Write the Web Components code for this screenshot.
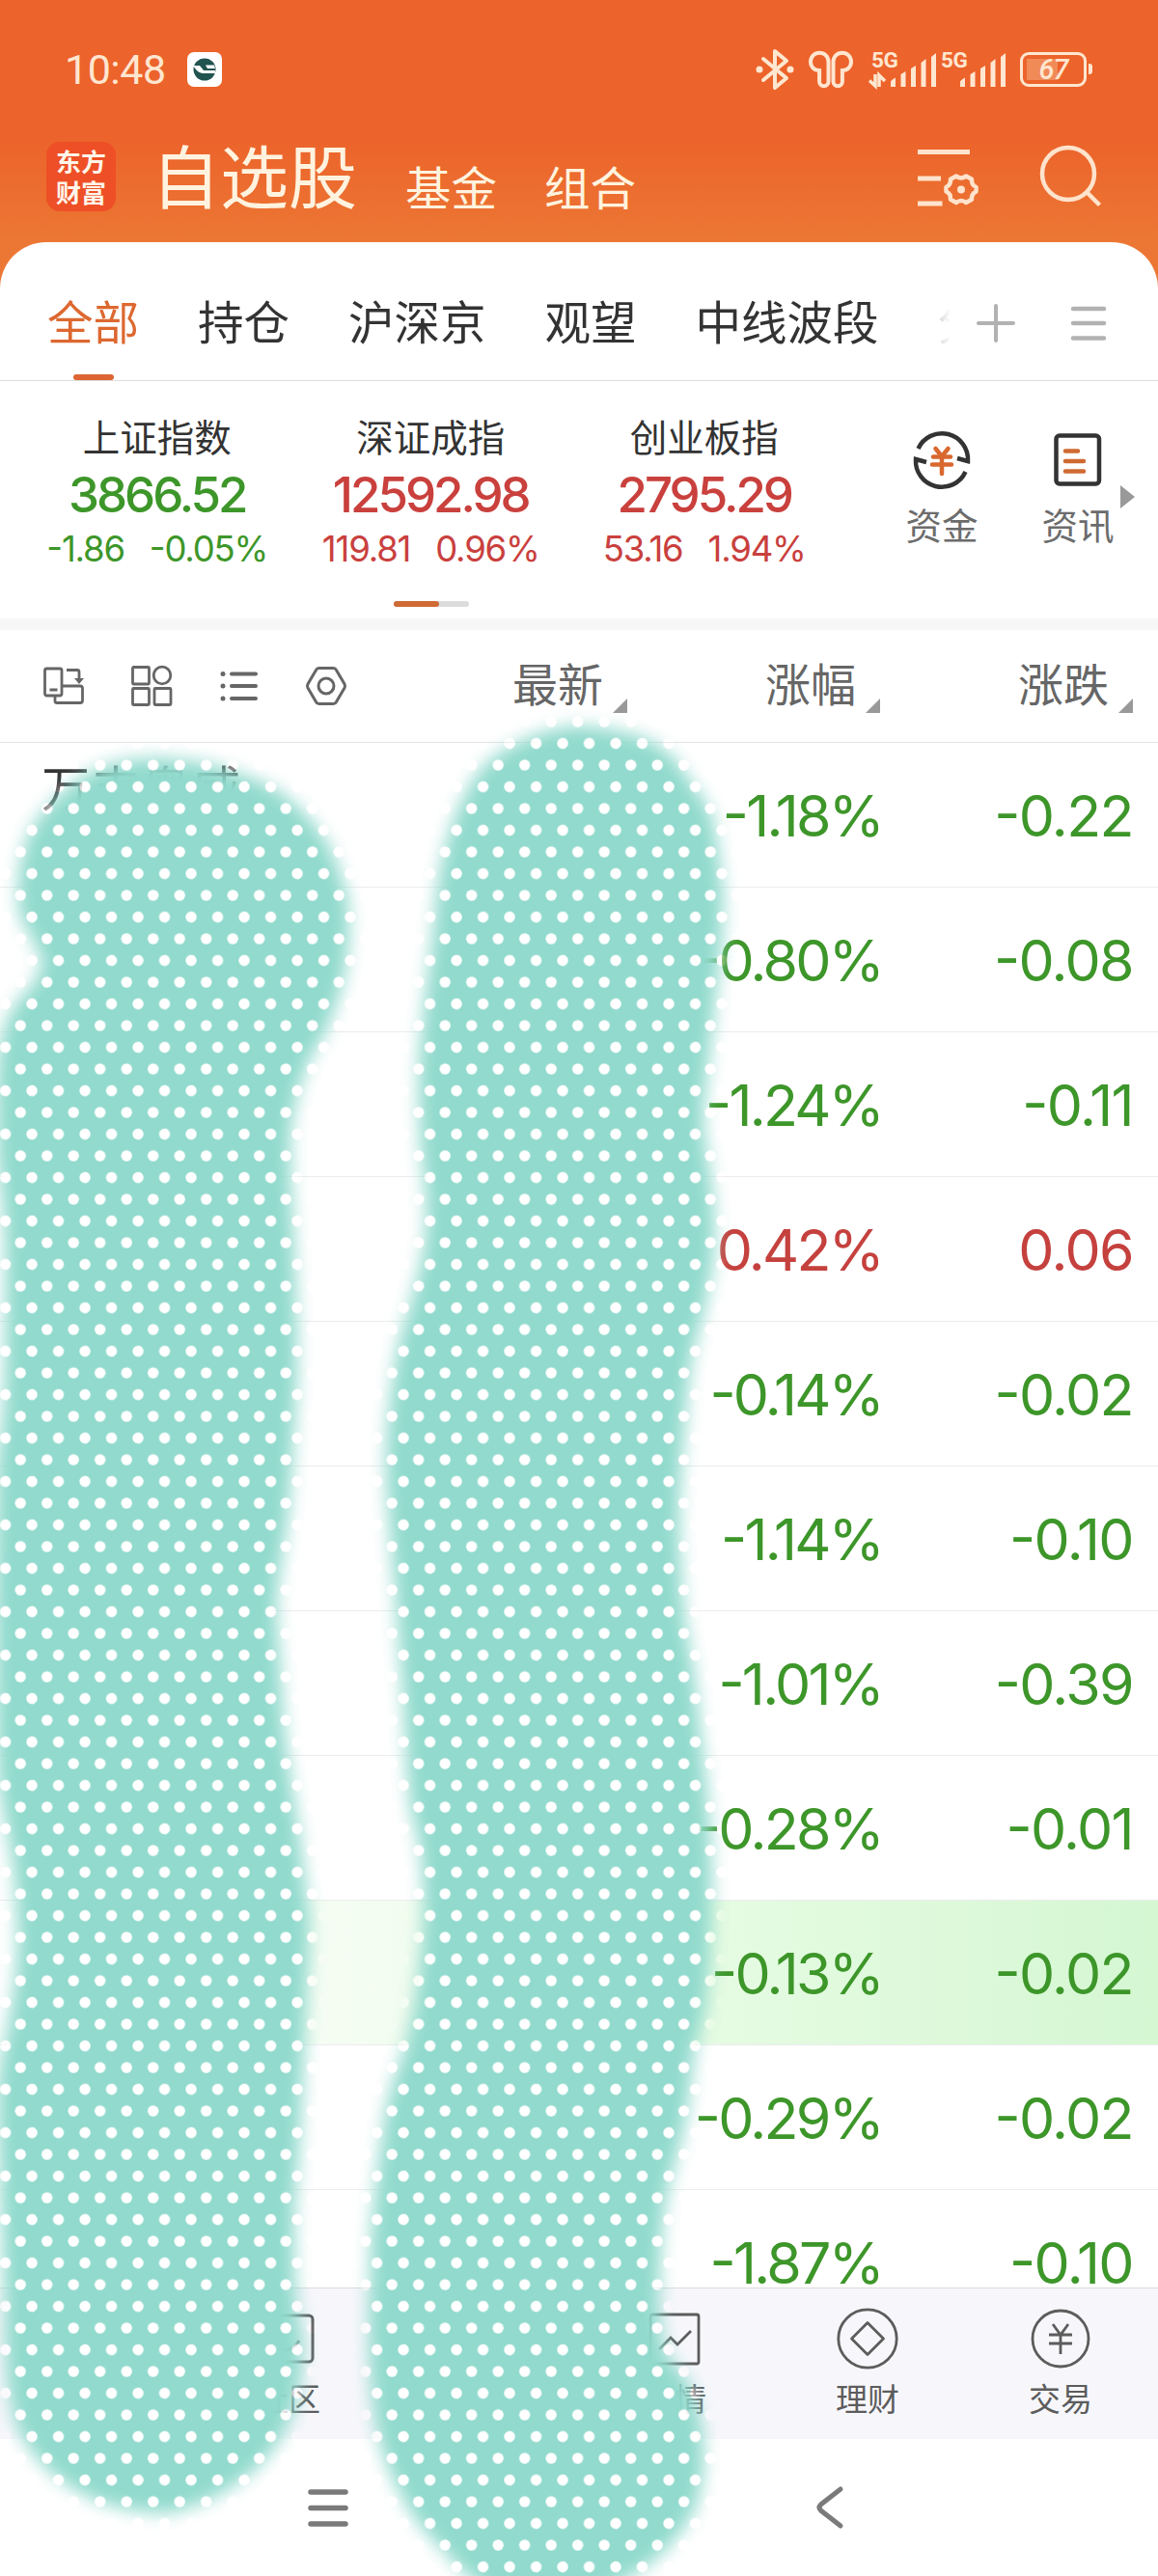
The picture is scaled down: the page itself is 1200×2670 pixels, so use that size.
<!DOCTYPE html>
<html lang="zh-CN">
<head>
<meta charset="utf-8">
<title>自选股</title>
<style>
html,body{margin:0;padding:0}
body{width:1200px;height:2670px;overflow:hidden;background:#fff;font-family:Roboto,"Noto Sans CJK SC",sans-serif}
</style>
</head>
<body>
<watch-app></watch-app>
<script>
const define=(name,html,setup)=>customElements.define(name,class extends HTMLElement{
  constructor(){
    super();
    this.attachShadow({mode:'open'}).innerHTML=html;
  }
  connectedCallback(){
    if(setup) setup(this,this.shadowRoot);
  }
});

// name: [width, height, markup]
const ICONS={
  app:[36,36,`<rect width="36" height="36" rx="7" fill="#fff"/><ellipse cx="18" cy="18" rx="11.5" ry="11.5" fill="#21534f"/><path d="M6 14h7l4 5h12v3H17c-4 0-7-2-11-8z" fill="#fff"/><path d="M19 13.500h9l1 3.500h-8z" fill="#fff"/>`],
  bluetooth:[40,44,`<g fill="none" stroke="currentColor" stroke-width="4" stroke-linejoin="round" stroke-linecap="round"><path d="M8 11 32 31 20 41V3L32 13 8 33"/></g><circle cx="4" cy="22" r="3.500" fill="currentColor"/><circle cx="36" cy="22" r="3.500" fill="currentColor"/>`],
  buds:[46,40,`<g fill="none" stroke="currentColor" stroke-width="4"><path d="M20.500 12v20.500a4.700 4.700 0 0 1-9.400 0V21C5.500 21 2 17 2 12a9.200 9.200 0 0 1 18.500 0z"/><path d="M25.500 12v20.500a4.700 4.700 0 0 0 9.400 0V21c5.600 0 9.100-4 9.100-9a9.200 9.200 0 0 0-18.500 0z"/></g>`],
  signal:[50,36,`<g fill="currentColor"><path d="M2 36v-5q0-2 5-4.500V36zM12.500 36V23l5-3V36zM23 36V17l5-3V36zM33.500 36V11l5-4V36zM44 36V5l5-4V36z"/></g>`],
  updown:[16,13,`<path d="M6 0v12L0 6.500M10 13V1l6 6" fill="none" stroke="currentColor" stroke-width="3.500"/>`],
  filter:[64,62,`<g fill="none" stroke="currentColor" stroke-width="5"><path d="M1 6.500h54M1 34h24M1 60h25.500"/><path stroke-width="4.500" stroke-linejoin="round" d="M41 31.500q5 4 10 0l6 3.300q-.5 6 4.500 8.200v4.500q-5 2.500-4.500 8.200l-6 3.300q-5-4-10 0l-6-3.300q.5-6-4.500-8.200v-4.500q5-2.500 4.500-8.200z"/></g><circle cx="46" cy="45.500" r="4" fill="currentColor"/>`],
  search:[66,66,`<g fill="none" stroke="currentColor" stroke-width="4.500"><circle cx="30" cy="31" r="27"/><path d="m49 50 13.500 13.500"/></g>`],
  plus:[40,40,`<path d="M20 2v36M2 20h36" stroke="currentColor" stroke-width="4" stroke-linecap="round"/>`],
  menu:[36,38,`<path d="M2 4h32M2 19h32M2 34.500h32" stroke="currentColor" stroke-width="4.500" stroke-linecap="round"/>`],
  fund:[60,60,`<g fill="none" stroke="#333" stroke-width="4.500"><path d="M5.500 18A27 27 0 0 1 57 31l-11-3M54.500 42A27 27 0 0 1 3 29l11 3"/></g><path d="m23.500 18 6.500 8 6.500-8M30 25v19M21 26.500h18M20 34.500h20" fill="none" stroke="#d9682f" stroke-width="4.500" stroke-linecap="round"/>`],
  news:[50,56,`<rect x="2.500" y="2.500" width="44.500" height="50" rx="3.500" fill="none" stroke="#333" stroke-width="4.500"/><path d="M12 18.500h13M12 29h19M12 39.500h19" stroke="#cf6a31" stroke-width="4.500" stroke-linecap="round"/>`],
  swap:[42,40,`<g fill="none" stroke="currentColor" stroke-width="2.800"><rect x="1.500" y="2" width="17.500" height="28" rx="2"/><path d="M6.500 24h8M12 31v4.500q0 2 2 2h24q2.500 0 2.500-2.500V22.500q0-2.500-2.500-2.500H20M24 3.500h11q2 0 2 2V14"/></g><path d="M32 12h10l-5 6z" fill="currentColor"/>`],
  grid:[42,42,`<g fill="none" stroke="currentColor" stroke-width="2.800"><rect x="1.500" y="1.500" width="17" height="17.500" rx="1"/><circle cx="32" cy="10" r="8.800"/><rect x="1.500" y="23.500" width="17" height="17" rx="1"/><rect x="24" y="23.500" width="17" height="17" rx="1"/></g>`],
  list:[40,32,`<path d="M12 3.500h25M12 16h25M12 29h25" stroke="currentColor" stroke-width="4" stroke-linecap="round"/><g fill="currentColor"><circle cx="3" cy="3.500" r="2.500"/><circle cx="3" cy="16" r="2.500"/><circle cx="3" cy="29" r="2.500"/></g>`],
  nut:[42,40,`<g fill="none" stroke="currentColor" stroke-width="3"><path d="M13.500 1.500h15q2 0 3 2l8.500 14.500q1 2 0 4L31.500 36.500q-1 2-3 2h-15q-2 0-3-2L2 22q-1-2 0-4l8.500-14.500q1-2 3-2z"/><circle cx="21" cy="20" r="8"/></g>`],
  bubble:[52,52,`<g fill="none" stroke="currentColor" stroke-width="3"><rect x="2" y="2" width="49" height="48" rx="4"/><path d="M16 36q12 6 21-8"/></g>`],
  chart:[54,54,`<g fill="none" stroke="currentColor" stroke-width="2.800"><rect x="2" y="2" width="50" height="51" rx="2"/><path d="m11 38 12-12 7 7 14-14"/></g>`],
  wealth:[64,64,`<g fill="none" stroke="currentColor" stroke-width="2.800"><circle cx="32" cy="32" r="30.200"/><path stroke-linejoin="round" d="m32 15.500 16.500 16.500L32 48.500 15.500 32z"/></g>`],
  trade:[64,64,`<g fill="none" stroke="currentColor" stroke-width="2.800"><circle cx="32" cy="32" r="29"/><path d="m24 17 8 11 8-11M32 27v21M20 28h24M20 37h24"/></g>`],
  recents:[42,42,`<path d="M3 5h36M3 21.500h36M3 38h36" stroke="currentColor" stroke-width="5.500" stroke-linecap="round"/>`],
  back:[30,46,`<path d="M26 4 5.500 20q-3 3 0 6L26 42" fill="none" stroke="currentColor" stroke-width="5" stroke-linecap="round"/>`]
};

define('ui-icon',`<style>
:host{display:block;flex:none;line-height:0}
svg{display:block;overflow:visible}
</style><slot></slot>`,(el,root)=>{
  const [w,h,body]=ICONS[el.getAttribute('name')];
  root.innerHTML+=`<svg width="${w}" height="${h}" viewBox="0 0 ${w} ${h}">${body}</svg>`;
});

define('status-bar',`<style>
:host{display:flex;align-items:center;height:144px;box-sizing:border-box;padding:0 74px 0 67px;color:#ffe6d0}
time{font-size:43px;line-height:50px;letter-spacing:-.5px;margin-right:24px;width:103px;white-space:nowrap}
.right{display:flex;align-items:center;margin-left:auto}
.cell{display:grid;grid-template-columns:20px 50px;height:36px;position:relative;width:68px}
.cell b{position:absolute;left:2px;top:-1px;font-size:22.500px;line-height:18px;font-weight:700;letter-spacing:-.5px}
.cell ui-icon[name=signal]{grid-column:2;margin-top:0}
.cell ui-icon[name=updown]{position:absolute;left:0;top:23px}
.battery{display:flex;align-items:center;justify-content:center;box-sizing:border-box;width:69px;height:36px;border:3.500px solid currentColor;border-radius:9px;
font-size:29px;line-height:28px;font-style:italic;font-weight:500;letter-spacing:-1px;position:relative;background:linear-gradient(#f08b58,#f08b58) 4px center/32px 22px no-repeat}
.battery:after{content:'';position:absolute;right:-9px;top:9px;width:4px;height:11px;border-radius:0 3px 3px 0;background:currentColor}
</style><time>10:48</time><ui-icon name="app"></ui-icon>
<div class="right">
<ui-icon name="bluetooth" style="margin-right:15px"></ui-icon>
<ui-icon name="buds" style="margin-right:17px"></ui-icon>
<div class="cell" style="margin-right:4px"><b>5G</b><ui-icon name="updown"></ui-icon><ui-icon name="signal"></ui-icon></div>
<div class="cell" style="margin-right:16px"><b>5G</b><ui-icon name="signal"></ui-icon></div>
<div class="battery">67</div>
</div>`);

define('app-header',`<style>
:host{display:flex;align-items:flex-end;height:107px;box-sizing:border-box;padding:0 57px 32px 48px;color:#fff3df}
.logo{display:grid;place-content:center;width:72px;height:72px;border-radius:14px;background:#ee4f26;font:700 26px/32px "Noto Sans CJK SC",sans-serif;text-align:center;color:#fff6ea}
h1{margin:0 0 0 37px;font-size:71px;line-height:74px;font-weight:400;width:217px}
a{font-size:47.500px;line-height:50px;margin-left:46px}
a+a{margin-left:49px}
h1,a{white-space:nowrap;position:relative}
h1{top:4px}
a{top:3px}
ui-icon{color:#ffe3cc}
ui-icon[name=filter]{margin-left:auto;margin-bottom:6px}
ui-icon[name=search]{margin-left:63px;margin-bottom:4px}
</style><div class="logo"><span>东方</span><span>财富</span></div><h1>自选股</h1><a>基金</a><a>组合</a>
<ui-icon name="filter"></ui-icon><ui-icon name="search"></ui-icon>`);

define('group-tabs',`<style>
:host{display:flex;align-items:stretch;height:144px;box-sizing:border-box;border-bottom:1.500px solid #dedede;padding:0 54px 0 49px;color:#333;font-size:47.500px;line-height:50px;background:#fff;border-radius:48px 48px 0 0}
.strip{display:flex;gap:61px;width:936px;overflow:hidden;-webkit-mask:linear-gradient(90deg,#000 905px,transparent 936px);mask:linear-gradient(90deg,#000 905px,transparent 936px)}
.strip span{flex:none;display:flex;flex-direction:column;align-items:center;padding-top:60px}
.strip span:last-child{color:#999}
.on{color:#dd6830}
.on:after{content:'';width:42px;height:7px;border-radius:4px;background:#dd6433;margin-top:27px}
ui-icon{color:#b2b2b2;align-self:center}
.more{margin:24px 0 0 27px}
.menu{margin:24px 0 0 auto}
</style><div class="strip"><span class="on">全部</span><span>持仓</span><span>沪深京</span><span>观望</span><span>中线波段</span><span>分</span></div>
<ui-icon class="more" name="plus"></ui-icon><ui-icon class="menu" name="menu"></ui-icon>`);

define('index-quote',`<style>
:host{display:flex;flex-direction:column;align-items:center;width:283.500px;white-space:nowrap;color:#c9403d}
:host([down]){color:#3d9629}
.name{font-size:38.500px;line-height:44px;color:#333}
.value{font:500 51px/56px Inter,sans-serif;letter-spacing:-3px;margin-top:8px}
.delta{display:flex;gap:26px;font:36.500px/42px Inter,sans-serif;letter-spacing:-1.200px;font-feature-settings:"case";margin-top:7px}
</style><div class="name"></div><div class="value"></div><div class="delta"><span></span><span></span></div>`,(el,root)=>{
  root.querySelector('.name').textContent=el.getAttribute('name');
  root.querySelector('.value').textContent=el.getAttribute('value');
  const [diff,pct]=root.querySelectorAll('.delta span');
  diff.textContent=el.getAttribute('diff');
  pct.textContent=el.getAttribute('pct');
});

define('quick-link',`<style>
:host{display:flex;flex-direction:column;align-items:center;width:141px;font-size:37.500px;line-height:44px;color:#6c6c6c}
.icon{display:grid;place-items:center;height:62px;margin-bottom:16px}
</style><div class="icon"><slot name="icon"></slot></div><slot></slot>`);

define('index-panel',`<style>
:host{display:block;height:246px;border-bottom:12px solid #f7f7f7;padding-left:21px}
.row{display:flex;padding-top:38px;height:190px;box-sizing:content-box}
.quick{display:flex;margin:13px 0 0 34px}
.arrow{border-left:15px solid #999;border-top:12px solid transparent;border-bottom:12px solid transparent;height:0;margin:57px 0 0 -27px}
.pager{display:flex;width:78px;height:6px;border-radius:3px;background:#dcdcdc;margin-left:387px}
.pager i{width:47px;border-radius:3px;background:#cf6a35}
</style><div class="row">
<index-quote down name="上证指数" value="3866.52" diff="-1.86" pct="-0.05%"></index-quote>
<index-quote name="深证成指" value="12592.98" diff="119.81" pct="0.96%"></index-quote>
<index-quote name="创业板指" value="2795.29" diff="53.16" pct="1.94%"></index-quote>
<div class="quick"><quick-link><ui-icon slot="icon" name="fund"></ui-icon>资金</quick-link><quick-link><ui-icon slot="icon" name="news"></ui-icon>资讯</quick-link>
<span class="arrow"></span></div>
</div><div class="pager"><i></i></div>`);

define('column-head',`<style>
:host{display:flex;align-items:center;justify-content:flex-end;width:262px;font-size:47px;line-height:50px;color:#666}
i{border-left:15px solid transparent;border-bottom:15px solid #999;margin:41px 0 0 10px}
</style><slot></slot><i></i>`);

define('list-head',`<style>
:host{display:flex;height:117px;box-sizing:border-box;border-bottom:1.500px solid #e4e4e4;align-items:center;padding:0 26px 1px 44.500px;color:#666}
.tools{display:flex;align-items:center;gap:49.500px;width:343px}
column-head:first-of-type{margin-left:auto}
</style><div class="tools"><ui-icon name="swap"></ui-icon><ui-icon name="grid"></ui-icon><ui-icon name="list"></ui-icon><ui-icon name="nut"></ui-icon></div>
<column-head>最新</column-head><column-head>涨幅</column-head><column-head>涨跌</column-head>`);

define('quote-row',`<style>
:host{display:grid;grid-template-columns:1fr 262px 262px;height:150px;box-sizing:border-box;border-bottom:1.500px solid #ececec;padding:0 26px 0 43px;
color:#3d9629}
:host([up]){color:#c5413e}
:host([flash]){background:linear-gradient(90deg,#fff,#f5fdf3 28%,#e4fbe1 65%,#d5f7d2)}
.name{text-align:left;font-size:50px;line-height:56px;letter-spacing:2px;color:#333;padding-top:21px}
.num{padding-top:53px;font:59px/46px Inter,sans-serif;letter-spacing:-1.600px;font-feature-settings:"case";text-align:right;white-space:nowrap}
.pct{letter-spacing:-2.700px;padding-right:-2px;margin-right:-2px}
</style><div class="name"></div><div class="num pct"></div><div class="num"></div>`,(el,root)=>{
  root.querySelector('.name').textContent=el.getAttribute('name')||'';
  const [pct,diff]=root.querySelectorAll('.num');
  pct.textContent=el.getAttribute('pct');
  diff.textContent=el.getAttribute('diff');
});

define('quote-list',`<style>
:host{display:block;height:1601px;overflow:hidden}
quote-row:last-child{height:101px;border:0}
</style>`,(el,root)=>{
  const rows=[
    ['-1.18%','-0.22','万丰奥威'],['-0.80%','-0.08'],['-1.24%','-0.11'],['0.42%','0.06'],
    ['-0.14%','-0.02'],['-1.14%','-0.10'],['-1.01%','-0.39'],['-0.28%','-0.01'],
    ['-0.13%','-0.02'],['-0.29%','-0.02'],['-1.87%','-0.10']
  ];
  rows.forEach(([pct,diff,name],i)=>{
    const row=document.createElement('quote-row');
    row.setAttribute('pct',pct);
    row.setAttribute('diff',diff);
    if(name) row.setAttribute('name',name);
    if(pct[0]!=='-') row.setAttribute('up','');
    if(i===8) row.setAttribute('flash','');
    root.appendChild(row);
  });
});

define('tab-item',`<style>
:host{display:flex;flex-direction:column;align-items:center;width:200px;font-size:33px;line-height:38px;color:#5c5c5c}
.icon{display:grid;place-items:center;height:64px;margin:20px 0 13px}
</style><div class="icon"><slot name="icon"></slot></div><slot></slot>`);

define('tab-bar',`<style>
:host{display:flex;height:157px;box-sizing:border-box;border-top:1.500px solid #dadada;background:#f7f7fb;padding-left:199px}
.gap{width:200px}
</style><tab-item><ui-icon slot="icon" name="bubble"></ui-icon>社区</tab-item><span class="gap"></span>
<tab-item><ui-icon slot="icon" name="chart"></ui-icon>行情</tab-item>
<tab-item><ui-icon slot="icon" name="wealth"></ui-icon>理财</tab-item>
<tab-item><ui-icon slot="icon" name="trade"></ui-icon>交易</tab-item>`);

define('system-nav',`<style>
:host{display:flex;align-items:center;justify-content:space-between;height:142px;padding:0 325px 0 319px;color:#7a7a7a}
</style><ui-icon name="recents"></ui-icon><ui-icon name="back"></ui-icon>`);

// closed smooth curve through the points (Catmull-Rom as cubic beziers)
const smooth=flat=>{
  const p=[];
  for(let i=0;i<flat.length;i+=2) p.push([flat[i],flat[i+1]]);
  const n=p.length;
  let d=`M${p[0]}`;
  for(let i=0;i<n;i++){
    const a=p[(i+n-1)%n],b=p[i],c=p[(i+1)%n],e=p[(i+2)%n];
    d+=`C${b[0]+(c[0]-a[0])/6},${b[1]+(c[1]-a[1])/6} ${c[0]-(e[0]-b[0])/6},${c[1]-(e[1]-b[1])/6} ${c}`;
  }
  return d+'Z';
};
const STROKES=[
  [155,786,200,789,240,799,290,821,333,864,355,913,362,955,356,1015,337,1070,322,1096,307,1140,301,1191,306,1319,308,1408,304,1497,298,1574,287,1657,290,1720,296,1803,309,1893,317,1957,321,2000,318,2070,311,2210,305,2300,307,2383,314,2430,311,2467,304,2500,287,2533,264,2560,230,2584,199,2598,168,2605,115,2597,77,2580,50,2560,27,2533,13,2500,6,2450,4,2367,0,2260,-2,2160,10,2090,18,2020,14,1940,4,1880,-4,1800,-4,1550,4,1446,5,1287,-3,1190,-2,1100,10,1051,34,1020,43,997,33,973,20,945,20,903,30,865,48,838,76,812,110,793],
  [610,753,662,763,694,782,715,809,736,842,744,880,749,927,748,973,741,1040,735,1096,729,1159,735,1210,740,1255,739,1306,730,1357,717,1408,709,1485,704,1574,709,1670,719,1733,726,1797,733,1861,737,1925,737,2000,731,2080,720,2125,710,2200,690,2281,684,2350,684,2400,692,2440,712,2467,724,2500,729,2533,728,2567,720,2600,703,2627,682,2650,650,2672,600,2695,530,2695,486,2670,459,2643,432,2613,409,2573,394,2533,385,2483,382,2417,383,2367,386,2300,398,2200,409,2153,421,2117,431,2067,438,2000,438,1950,434,1910,424,1861,418,1765,411,1670,403,1574,400,1510,405,1446,413,1395,429,1338,440,1287,441,1236,436,1191,434,1110,440,1040,448,973,453,923,461,880,474,840,495,802,516,782,547,765,579,755]
];
define('dot-brush',`<style>
:host{position:absolute;left:0;top:0;width:1200px;height:2670px;pointer-events:none}
svg{display:block}
</style><svg width="1200" height="2670" viewBox="0 0 1200 2670">
<defs>
<filter id="soft" filterUnits="userSpaceOnUse" x="-60" y="700" width="900" height="2100"><feGaussianBlur stdDeviation="9"/></filter>
<pattern id="dots" width="27.500" height="45" patternUnits="userSpaceOnUse" patternTransform="translate(7.450 826.750)">
<rect width="27.500" height="45" fill="#91dacd"/><circle cx="13.750" cy="11.250" r="5.700" fill="#fff"/>
<circle cx="25.600" cy="33.750" r="5.700" fill="#fff"/><circle cx="-1.900" cy="33.750" r="5.700" fill="#fff"/></pattern>
<mask id="shape" maskUnits="userSpaceOnUse" x="0" y="0" width="1200" height="2670"><g fill="#fff" filter="url(#soft)">${STROKES.map(s=>`<path d="${smooth(s)}"/>`).join('')}</g></mask>
</defs>
<rect width="1200" height="2670" fill="url(#dots)" mask="url(#shape)"/></svg>`);

define('watch-app',`<style>
:host{display:block;position:relative;width:1200px;height:2670px;overflow:hidden;background:linear-gradient(#ec632b 140px,#ec7734 252px,#ec7734 320px,#fff 320px)}
</style><status-bar></status-bar><app-header></app-header><group-tabs></group-tabs><index-panel></index-panel>
<list-head></list-head><quote-list></quote-list><tab-bar></tab-bar><system-nav></system-nav><dot-brush></dot-brush>`);
</script>
</body>
</html>
